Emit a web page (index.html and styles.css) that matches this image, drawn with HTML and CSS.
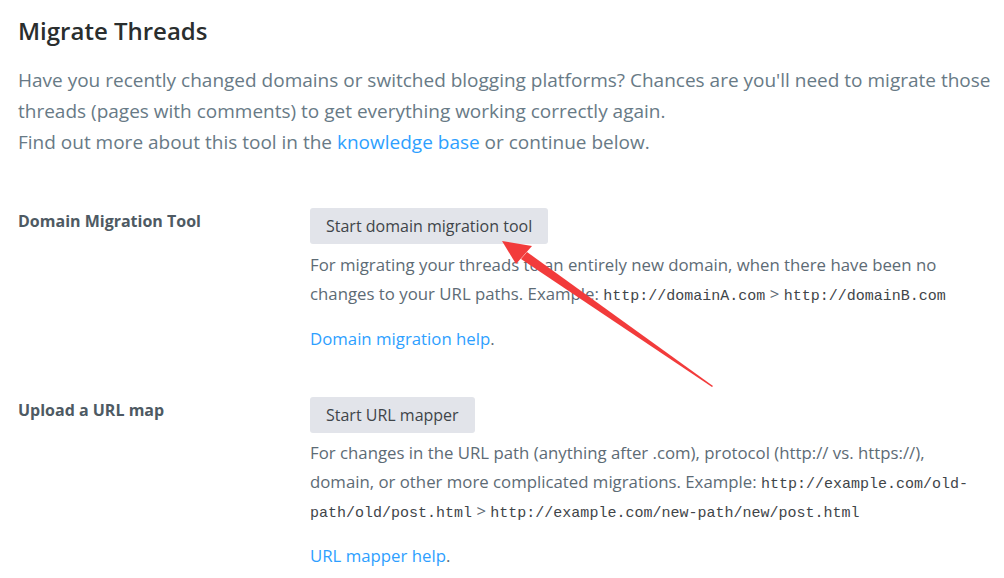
FILE: index.html
```html
<!DOCTYPE html>
<html>
<head>
<meta charset="utf-8">
<link rel="stylesheet" href="styles.css">
</head>
<body>
<div class="page">
  <h1 class="title">Migrate Threads</h1>
  <p class="intro">Have you recently changed domains or switched blogging platforms? Chances are you'll need to migrate those threads (pages with comments) to get everything working correctly again.<br>Find out more about this tool in the <a href="#" class="link">knowledge base</a> or continue below.</p>

  <div class="tool">
    <div class="tool-label">Domain Migration Tool</div>
    <div class="tool-body">
      <button class="btn">Start domain migration tool</button>
      <p class="desc">For migrating your threads to an entirely new domain, when there have been no changes to your URL paths. Example: <code>http://domainA.com</code> &gt; <code>http://domainB.com</code></p>
      <p class="help"><a href="#" class="link">Domain migration help</a>.</p>
    </div>
  </div>

  <div class="tool tool-second">
    <div class="tool-label">Upload a URL map</div>
    <div class="tool-body">
      <button class="btn">Start URL mapper</button>
      <p class="desc">For changes in the URL path (anything after .com), protocol (http:// vs. https://), domain, or other more complicated migrations. Example: <code>http://example.com/old-path/old/post.html</code> &gt; <code>http://example.com/new-path/new/post.html</code></p>
      <p class="help"><a href="#" class="link">URL mapper help</a>.</p>
    </div>
  </div>
</div>
<svg class="arrow" width="1004" height="578" viewBox="0 0 1004 578">
  <polygon points="713,386 527,252 521,259 712,387" fill="#f23b3b"/>
  <polygon points="502,241 532,246 516,264" fill="#f23b3b"/>
</svg>
</body>
</html>
```
FILE: styles.css
```css
html, body {
  margin: 0;
  padding: 0;
  background: #ffffff;
}
body {
  font-family: "Open Sans", "Noto Sans", sans-serif;
  color: #5d6b75;
  position: relative;
  width: 1004px;
  height: 578px;
  overflow: hidden;
}
.page {
  padding: 14px 0 0 18px;
  width: 982px;
}
.title {
  margin: 0;
  font-size: 24px;
  font-weight: 600;
  color: #2a2e2e;
  line-height: 34px;
}
.intro {
  margin: 17px 0 0;
  font-size: 19px;
  line-height: 31px;
  color: #687a86;
}
.link {
  color: #2e9fff;
  text-decoration: none;
}
.tool {
  display: flex;
  margin-top: 50px;
}
.tool-second {
  margin-top: 44px;
}
.tool-label {
  width: 292px;
  flex: none;
  font-size: 16px;
  line-height: 22px;
  font-weight: 700;
  color: #4e5a63;
  padding-top: 2px;
}
.tool-body {
  flex: none;
  width: 676px;
}
.btn {
  display: block;
  font-family: inherit;
  font-size: 16px;
  color: #3f4549;
  background: #e2e4ea;
  border: none;
  border-radius: 3px;
  padding: 0 16px;
  height: 36px;
  line-height: 36px;
}
.desc {
  margin: 6px 0 0;
  font-size: 16.8px;
  line-height: 29px;
  color: #5d6b75;
}
.tool-second .desc {
  margin-top: 5px;
}
code {
  font-family: "Liberation Mono", "Courier New", monospace;
  font-size: 15px;
  line-height: 1;
  color: #3f4549;
}
.help {
  margin: 16px 0 0;
  font-size: 16.8px;
  line-height: 29px;
}
.arrow {
  position: absolute;
  left: 0;
  top: 0;
  pointer-events: none;
}
```
